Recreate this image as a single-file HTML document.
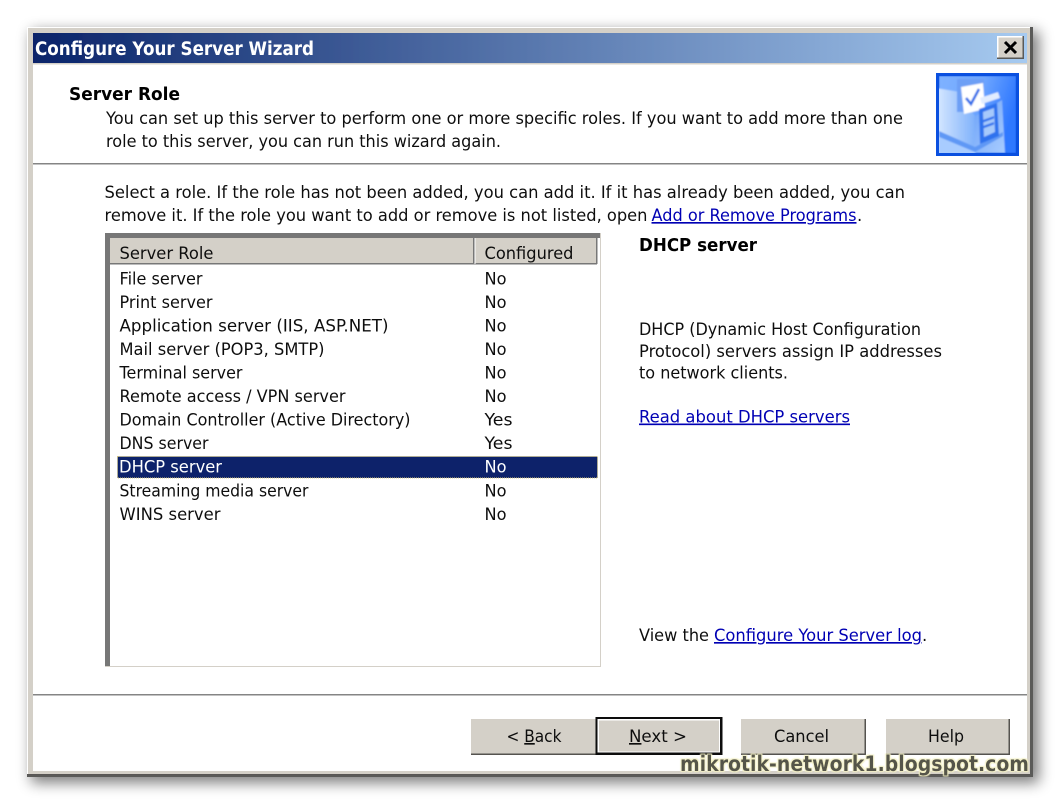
<!DOCTYPE html>
<html><head><meta charset="utf-8"><style>
html,body{margin:0;padding:0;background:#fff;width:1060px;height:804px;overflow:hidden}
svg{display:block}
text{font-family:"DejaVu Sans","Liberation Sans",sans-serif;font-size:16.5px;fill:#111}
.b{font-weight:bold}
.l{fill:#0000b4;text-decoration:underline}
</style></head><body>
<svg width="1060" height="804" viewBox="0 0 1060 804" xmlns="http://www.w3.org/2000/svg">
<defs>
<linearGradient id="tb" x1="0" x2="1" y1="0" y2="0"><stop offset="0" stop-color="#0a246a"/><stop offset="1" stop-color="#a6caf0"/></linearGradient>
<filter id="sh" x="-5%" y="-5%" width="110%" height="110%"><feGaussianBlur stdDeviation="7"/></filter>
<filter id="so" x="0" y="0" width="100%" height="100%"><feGaussianBlur stdDeviation="0.35"/></filter>
<filter id="ib" x="0" y="0" width="100%" height="100%"><feGaussianBlur stdDeviation="0.8"/></filter>
<filter id="wm" x="-5%" y="-30%" width="110%" height="160%"><feMorphology in="SourceAlpha" operator="dilate" radius="1.2" result="d"/><feGaussianBlur in="d" stdDeviation="0.6" result="g"/><feFlood flood-color="#f3f0c4"/><feComposite in2="g" operator="in" result="o"/><feMerge><feMergeNode in="o"/><feMergeNode in="SourceGraphic"/></feMerge></filter>
<linearGradient id="ic" x1="0" x2="1" y1="0" y2="0.3"><stop offset="0" stop-color="#7fb2ff"/><stop offset=".55" stop-color="#6ea6ff"/><stop offset="1" stop-color="#2f78ff"/></linearGradient>
<linearGradient id="cab" x1="0" x2="1" y1="0" y2="0"><stop offset="0" stop-color="#d8e9ff"/><stop offset="1" stop-color="#7db0fb"/></linearGradient>
<linearGradient id="cab2" x1="0" x2="1" y1="0" y2="1"><stop offset="0" stop-color="#6ea3f8"/><stop offset="1" stop-color="#a8ccff"/></linearGradient>
</defs>

<!-- window -->
<rect x="27" y="27" width="1008" height="752" fill="#000" opacity=".5" filter="url(#sh)" transform="translate(4 4)"/>
<g filter="url(#so)">
<rect x="27" y="27" width="1006" height="750" fill="#55534f"/>
<rect x="27" y="27" width="1003" height="747" fill="#fff"/>
<rect x="28" y="28" width="1002" height="746" fill="#d4d0c8"/>
<rect x="33" y="33" width="994" height="738" fill="#fff"/>
<rect x="1030" y="27" width="3" height="750" fill="#5a5a58"/>
<rect x="27" y="774.5" width="1006" height="2.5" fill="#5a5a58"/>

<!-- title bar -->
<rect x="33" y="33" width="994" height="30" fill="url(#tb)"/>
<rect x="33" y="63" width="994" height="1.5" fill="#d4d0c8"/>
<text class="b" x="35" y="55" textLength="279" lengthAdjust="spacingAndGlyphs" style="fill:#fff;font-size:18.5px">Configure Your Server Wizard</text>
<rect x="997" y="36" width="27" height="23" fill="#5a5a58"/>
<rect x="997" y="36" width="25.5" height="21.5" fill="#fff"/>
<rect x="998.5" y="37.5" width="24" height="20" fill="#d4d0c8"/>
<path d="M1005 42 L1016 53 M1016 42 L1005 53" stroke="#000" stroke-width="3" fill="none"/>

<!-- header -->
<text class="b" x="69" y="100" textLength="111" lengthAdjust="spacingAndGlyphs" style="font-size:17.5px;fill:#000">Server Role</text>
<text x="106" y="124" textLength="797" lengthAdjust="spacingAndGlyphs">You can set up this server to perform one or more specific roles. If you want to add more than one</text>
<text x="106" y="147" textLength="395" lengthAdjust="spacingAndGlyphs">role to this server, you can run this wizard again.</text>

<rect x="33" y="163" width="994" height="1.5" fill="#858585"/>

<!-- intro -->
<text x="104.5" y="198" textLength="800.5" lengthAdjust="spacingAndGlyphs">Select a role. If the role has not been added, you can add it. If it has already been added, you can</text>
<text x="104.5" y="221" textLength="543" lengthAdjust="spacingAndGlyphs">remove it. If the role you want to add or remove is not listed, open</text>
<text class="l" x="651.5" y="221" textLength="205" lengthAdjust="spacingAndGlyphs">Add or Remove Programs</text>
<text x="857" y="221">.</text>

<!-- list -->
<rect x="105" y="233" width="496" height="434" fill="#d4d0c8"/>
<rect x="105" y="233" width="495" height="433" fill="#777"/>
<rect x="110" y="238" width="490" height="428" fill="#fff"/>
<rect x="110" y="238" width="487" height="26" fill="#d4d0c8"/>
<rect x="110" y="263" width="487" height="1.5" fill="#777"/>
<rect x="473" y="238" width="1.5" height="26" fill="#777"/>
<rect x="474.5" y="238" width="1" height="26" fill="#fff"/>
<rect x="596" y="238" width="1.5" height="26" fill="#777"/>
<text x="119.5" y="259" textLength="94" lengthAdjust="spacingAndGlyphs">Server Role</text>
<text x="484.5" y="259" textLength="89" lengthAdjust="spacingAndGlyphs">Configured</text>

<rect x="117.5" y="456.5" width="480" height="21.5" fill="#0a246a" stroke="#d8c878" stroke-dasharray="1 1"/>

<text x="119.5" y="284.5" textLength="83" lengthAdjust="spacingAndGlyphs">File server</text>
<text x="119.5" y="308" textLength="93" lengthAdjust="spacingAndGlyphs">Print server</text>
<text x="119.5" y="331.5" textLength="269" lengthAdjust="spacingAndGlyphs">Application server (IIS, ASP.NET)</text>
<text x="119.5" y="355" textLength="205" lengthAdjust="spacingAndGlyphs">Mail server (POP3, SMTP)</text>
<text x="119.5" y="378.5" textLength="123" lengthAdjust="spacingAndGlyphs">Terminal server</text>
<text x="119.5" y="402" textLength="226" lengthAdjust="spacingAndGlyphs">Remote access / VPN server</text>
<text x="119.5" y="425.5" textLength="291" lengthAdjust="spacingAndGlyphs">Domain Controller (Active Directory)</text>
<text x="119.5" y="449" textLength="89" lengthAdjust="spacingAndGlyphs">DNS server</text>
<text x="119" y="472.5" textLength="103" lengthAdjust="spacingAndGlyphs" style="fill:#fff">DHCP server</text>
<text x="119.5" y="496.5" textLength="189" lengthAdjust="spacingAndGlyphs">Streaming media server</text>
<text x="119.5" y="520" textLength="101" lengthAdjust="spacingAndGlyphs">WINS server</text>

<text x="484.5" y="284.5" textLength="22" lengthAdjust="spacingAndGlyphs">No</text>
<text x="484.5" y="308" textLength="22" lengthAdjust="spacingAndGlyphs">No</text>
<text x="484.5" y="331.5" textLength="22" lengthAdjust="spacingAndGlyphs">No</text>
<text x="484.5" y="355" textLength="22" lengthAdjust="spacingAndGlyphs">No</text>
<text x="484.5" y="378.5" textLength="22" lengthAdjust="spacingAndGlyphs">No</text>
<text x="484.5" y="402" textLength="22" lengthAdjust="spacingAndGlyphs">No</text>
<text x="484.5" y="425.5" textLength="28" lengthAdjust="spacingAndGlyphs">Yes</text>
<text x="484.5" y="449" textLength="28" lengthAdjust="spacingAndGlyphs">Yes</text>
<text x="484.5" y="472.5" textLength="22" lengthAdjust="spacingAndGlyphs" style="fill:#fff">No</text>
<text x="484.5" y="496.5" textLength="22" lengthAdjust="spacingAndGlyphs">No</text>
<text x="484.5" y="520" textLength="22" lengthAdjust="spacingAndGlyphs">No</text>

<!-- right pane -->
<text class="b" x="639" y="251" textLength="118" lengthAdjust="spacingAndGlyphs" style="font-size:17.5px;fill:#000">DHCP server</text>
<text x="639" y="335" textLength="282" lengthAdjust="spacingAndGlyphs">DHCP (Dynamic Host Configuration</text>
<text x="639" y="357" textLength="303" lengthAdjust="spacingAndGlyphs">Protocol) servers assign IP addresses</text>
<text x="639" y="378.5" textLength="149" lengthAdjust="spacingAndGlyphs">to network clients.</text>
<text class="l" x="639" y="422.5" textLength="211" lengthAdjust="spacingAndGlyphs">Read about DHCP servers</text>
<text x="639" y="641" textLength="70" lengthAdjust="spacingAndGlyphs">View the</text>
<text class="l" x="714" y="641" textLength="208" lengthAdjust="spacingAndGlyphs">Configure Your Server log</text>
<text x="922" y="641">.</text>

<rect x="33" y="694" width="994" height="1.5" fill="#858585"/>

<!-- buttons -->
<rect x="471" y="719" width="126" height="36" fill="#55534f"/>
<rect x="471" y="719" width="124.5" height="34.5" fill="#d4d0c8"/>
<rect x="741" y="719" width="125" height="36" fill="#55534f"/>
<rect x="741" y="719" width="123.5" height="34.5" fill="#d4d0c8"/>
<rect x="886" y="719" width="124" height="36" fill="#55534f"/>
<rect x="886" y="719" width="122.5" height="34.5" fill="#d4d0c8"/>
<rect x="595.5" y="717" width="127" height="38" fill="#111"/>
<rect x="597.5" y="719" width="122.5" height="33.5" fill="#fff"/>
<rect x="599" y="720.5" width="120" height="31" fill="#d4d0c8"/>
<text x="506.5" y="742" textLength="55" lengthAdjust="spacingAndGlyphs">&lt; <tspan text-decoration="underline">B</tspan>ack</text>
<text x="629" y="742" textLength="58" lengthAdjust="spacingAndGlyphs"><tspan text-decoration="underline">N</tspan>ext &gt;</text>
<text x="774" y="742" textLength="55" lengthAdjust="spacingAndGlyphs">Cancel</text>
<text x="928" y="742" textLength="36" lengthAdjust="spacingAndGlyphs">Help</text>

<!-- watermark -->
<text class="b" x="680" y="771" textLength="349" lengthAdjust="spacingAndGlyphs" filter="url(#wm)" style="font-size:21px;fill:#55554a">mikrotik-network1.blogspot.com</text>
</g>

<!-- icon -->
<rect x="936" y="73" width="83" height="83" fill="#0a50e0"/>
<svg x="939" y="76" width="77" height="77" viewBox="939 76 77 77">
<g filter="url(#ib)">
<rect x="939" y="76" width="77" height="77" fill="url(#ic)"/>
<path d="M936 88 L960 92 L976 118 V158 H936Z" fill="url(#cab)"/>
<path d="M974 117 L1002 100 L1005 153 L974 153Z" fill="url(#cab2)"/>
<path d="M939 131 L975 147 L1003 132 V136 L975 152 L939 137Z" fill="#5f98f5"/>
<path d="M939 137 L975 152 V156 H939Z" fill="#a8ccff"/>
<rect x="957" y="79" width="27" height="33" fill="#6d9ff5"/>
<path d="M961 87 L983 83 L985 109 L964 114Z" fill="#fff"/>
<path d="M966 98 L971 104 L979 89" stroke="#2f70ea" stroke-width="2.6" fill="none"/>
<path d="M980 98 L998 92 L1000 98 L982 104Z" fill="#e2edff"/>
<path d="M979 109 L997 103 L999 136 L980 144Z" fill="#2f72ee"/>
<path d="M983 112 L994 108 L995 132 L984 137Z" fill="#a6c9fb"/>
<path d="M983 120 L994 116 V118.5 L983 122.5Z M983 126 L994 122 V124.5 L983 128.5Z" fill="#2f72ee"/>
</g>
</svg>
</svg>
</body></html>
